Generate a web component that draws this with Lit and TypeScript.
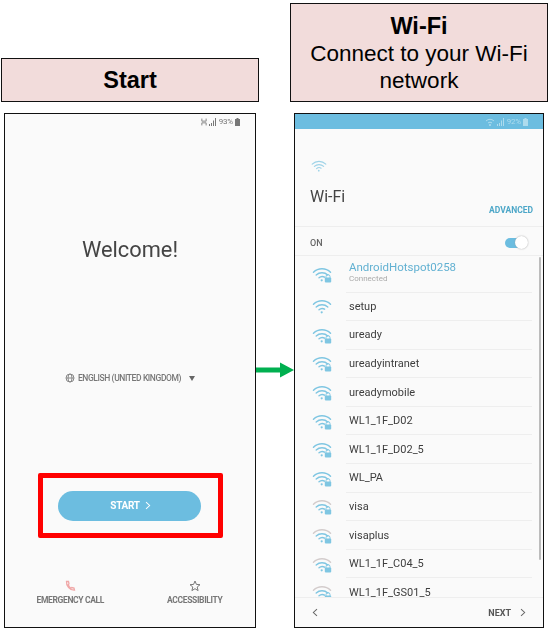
import { LitElement, html, css, svg } from "lit";
import { customElement } from "lit/decorators.js";

const wifi = (lit: number, lock: boolean, color = "#7fc6e2") => {
  const top = lit < 3 ? "#d3cccc" : color;
  return html`<svg class="wifi" viewBox="0 0 20 17" width="20" height="17" fill="none" stroke-linecap="round">
    <path d="M1.500 6.200C6.200 1.600 13.800 1.600 18.500 6.200" stroke=${top} stroke-width="1.500"/>
    <path d="M4.200 9C7.400 6 12.600 6 15.800 9" stroke=${color} stroke-width="1.400"/>
    <path d="M7 11.800C8.700 10.300 11 10.200 12.600 11.200" stroke=${color} stroke-width="1.400"/>
    <circle cx="9.700" cy="14.300" r="1.100" fill=${color}/>
    ${lock
      ? svg`<path d="M14 11.500V10.600a2 2 0 0 1 4 0V11.500" stroke=${color} stroke-width="1"/>
            <rect x="12.800" y="11.400" width="6.400" height="5" rx="1" fill=${color}/>`
      : ""}
  </svg>`;
};

const chevron = (color: string) =>
  html`<svg class="chev" viewBox="0 0 7 10" width="6" height="9" fill="none"><path d="M1.200 1l4.200 4-4.200 4" stroke=${color} stroke-width="1.200"/></svg>`;

const statusIcons = (color: string, pct: string, wifiIcon: boolean) => html`
  <div class="status" style="color:${color}">
    ${wifiIcon
      ? html`<svg viewBox="0 0 10 8" width="10" height="8" fill="none" stroke=${color}><path d="M1 3c2.400-2.200 5.600-2.200 8 0M3 5c1.300-1 2.700-1 4 0"/><circle cx="5" cy="7" r=".6" fill=${color}/></svg>`
      : html`<svg viewBox="0 0 7 8" width="6" height="8" fill="none" stroke=${color}><path d="M1 0v3h5V0M1 8V5h5v3"/></svg>`}
    <svg viewBox="0 0 8 8" width="8" height="8" fill=${color}><path d="M0 8h1V6H0zM2 8h1V5H2zM4 8h1V2.500H4zM6 8h1V0H6z"/></svg>
    <span>${pct}</span>
    <svg viewBox="0 0 5 8" width="5" height="8" fill=${color}><path d="M1.500 0h2v1H5v7H0V1h1.500z"/></svg>
  </div>`;

const networks: [string, number, boolean][] = [
  ["setup", 3, false],
  ["uready", 3, true],
  ["ureadyintranet", 3, true],
  ["ureadymobile", 3, true],
  ["WL1_1F_D02", 3, true],
  ["WL1_1F_D02_5", 3, true],
  ["WL_PA", 3, true],
  ["visa", 2, true],
  ["visaplus", 2, true],
  ["WL1_1F_C04_5", 2, true],
  ["WL1_1F_GS01_5", 2, true],
];

@customElement("app-root")
export class AppRoot extends LitElement {
  static styles = css`
    :host { display: block; width: 550px; height: 629px; position: relative; background: #fff; overflow: hidden; font-family: Roboto, "Liberation Sans", sans-serif; }
    .root { display: flex; align-items: flex-end; height: 629px; box-sizing: border-box; padding: 0 2px 1px 1px; gap: 31px; }
    .col { width: 258px; flex: none; display: flex; flex-direction: column; gap: 11px; }
    .label { box-sizing: border-box; border: 1px solid #111; background: #f2dcdb; color: #000; font-family: "Liberation Sans", Arial, sans-serif; font-size: 22.500px; line-height: 27px; text-align: center; display: flex; flex-direction: column; justify-content: center; }
    .label b { font-weight: 700; font-size: 23.500px; }
    .label.start { height: 44px; }
    .label.wifi-label { height: 99px; padding-top: 1px; }
    .phone { box-sizing: border-box; height: 515px; width: 252px; border: 1px solid #111; background: #fafafa; display: flex; flex-direction: column; overflow: hidden; }
    .phone.left { margin-left: 3px; }
    .phone.right { margin-left: 4px; width: 250px; }
    .inner { display: flex; flex-direction: column; flex: 1; min-height: 0; filter: blur(0.3px); }
    .status { display: flex; justify-content: flex-end; align-items: center; gap: 2px; height: 15px; padding-right: 15px; font-size: 8px; letter-spacing: -0.200px; }
    .welcome { margin-top: 107px; text-align: center; font-size: 21.800px; line-height: 28px; color: #444; }
    .lang { margin-top: 107px; height: 14px; display: flex; justify-content: center; align-items: center; gap: 3px; font-size: 8.500px; letter-spacing: -0.400px; font-weight: 500; color: #777; }
    .lang .tri { margin-left: 5px; width: 0; height: 0; border-left: 3.500px solid transparent; border-right: 3.500px solid transparent; border-top: 5px solid #666; }
    .redbox { align-self: center; box-sizing: border-box; margin: 88px 0 0 1px; width: 185px; height: 65px; border: 5px solid #f00; border-radius: 2px; display: flex; align-items: center; justify-content: center; background: #fafafa; }
    .btn { width: 143px; height: 30px; margin-right: 2px; border-radius: 15px; background: #6cbde0; color: #fff; font-size: 10px; font-weight: 700; display: flex; align-items: center; justify-content: center; gap: 5px; letter-spacing: -0.300px; padding: 0 0 1px 2px; box-sizing: border-box; }
    .bottom { margin-top: 42px; display: grid; grid-template-columns: 1fr 1fr; padding: 0 5px 0 0; }
    .act { display: flex; flex-direction: column; align-items: center; gap: 3px; font-size: 8.500px; letter-spacing: -0.350px; font-weight: 700; color: #777; line-height: 10px; }
    .act:first-child { padding-left: 8px; }
    .act:last-child { padding-left: 12px; }
    .appbar { height: 15px; background: #6cbde0; flex: none; }
    .appbar .status { padding-right: 15px; height: 15px; opacity: 0.9; }
    .head { height: 98px; flex: none; border-bottom: 1px solid #eee; padding: 30px 10px 0 15px; box-sizing: border-box; display: flex; flex-direction: column; }
    .head .wifi { width: 16px; height: 14px; margin-left: 1px; flex: none; }
    .head .title { margin-top: 13px; font-size: 16px; line-height: 22px; color: #444; }
    .head .adv { margin-top: -3px; align-self: flex-end; font-size: 8.500px; line-height: 10px; font-weight: 700; color: #4da7c8; }
    .on { height: 29px; flex: none; box-sizing: border-box; border-bottom: 1px solid #eee; padding: 3px 16px 0 15px; display: flex; align-items: center; justify-content: space-between; font-size: 9px; font-weight: 500; color: #666; }
    .toggle { position: relative; width: 22px; height: 10px; border-radius: 5px; background: #6cbde0; }
    .toggle::after { content: ""; position: absolute; right: -1px; top: -1.500px; width: 13px; height: 13px; border-radius: 50%; background: #fff; box-shadow: 0 0 1.500px #999; }
    .listwrap { position: relative; flex: 1; min-height: 0; overflow: hidden; }
    .scroll { position: absolute; right: 2px; top: 1px; width: 2px; height: 303px; background: #bcbcbc; border-radius: 1px; }
    .row { height: 28.600px; box-sizing: border-box; display: flex; align-items: center; padding-left: 17px; }
    .row.first { height: 36.500px; }
    .row .wifi { flex: none; margin-right: 17px; }
    .row .t { flex: none; width: 186px; height: 100%; box-sizing: border-box; border-bottom: 1px solid #eee; margin-left: -3px; padding-left: 3px; display: flex; flex-direction: column; justify-content: center; font-size: 11px; color: #3e3e3e; line-height: 13px; }
    .row.first .t { padding-bottom: 2px; }
    .row .t .ssid { color: #62b1d2; font-size: 11.500px; }
    .row .t small { font-size: 8px; line-height: 10px; color: #aaa; }
    .foot { height: 30px; flex: none; border-top: 1px solid #eee; box-sizing: border-box; display: flex; align-items: center; justify-content: space-between; padding: 0 17px 0 17px; background: #fafafa; }
    .next { display: flex; align-items: center; gap: 9px; font-size: 9px; font-weight: 700; color: #555; }
    .arrow { position: absolute; left: 256px; top: 362px; }
  `;

  render() {
    return html`
      <div class="root">
        <div class="col">
          <div class="label start"><b>Start</b></div>
          <div class="phone left"><div class="inner">
            ${statusIcons("#777", "93%", false)}
            <div class="welcome">Welcome!</div>
            <div class="lang">
              <svg viewBox="0 0 10 10" width="10" height="10" fill="none" stroke="#888" stroke-width="1"><circle cx="5" cy="5" r="4"/><ellipse cx="5" cy="5" rx="2" ry="4"/><path d="M1 5h8"/></svg>
              <span>ENGLISH (UNITED KINGDOM)</span><i class="tri"></i>
            </div>
            <div class="redbox"><div class="btn"><span>START</span>${chevron("#fff")}</div></div>
            <div class="bottom">
              <div class="act">
                <svg viewBox="0 0 12 12" width="12" height="12" fill="none" stroke="#f0a8a8" stroke-width="1.300" stroke-linecap="round"><path d="M2.500 1.500C2 5.500 6 10.500 10.500 10.200L10 8 7.800 7.500 7 8.300C5.700 7.500 4.700 6 4.300 4.700L5 3.800 4.500 1.500z"/></svg>
                <span>EMERGENCY CALL</span>
              </div>
              <div class="act">
                <svg viewBox="0 0 12 12" width="12" height="12" fill="none" stroke="#777" stroke-width="1" stroke-linejoin="round"><path d="M6 1l1.400 3.400 3.600.3-2.800 2.300.9 3.600L6 8.700l-3.100 1.900.9-3.600L1 4.700l3.600-.3z"/></svg>
                <span>ACCESSIBILITY</span>
              </div>
            </div>
          </div></div>
        </div>
        <div class="col">
          <div class="label wifi-label"><b>Wi-Fi</b><span>Connect to your Wi-Fi</span><span>network</span></div>
          <div class="phone right"><div class="inner">
            <div class="appbar">${statusIcons("#b5dfef", "92%", true)}</div>
            <div class="head">
              ${wifi(3, false, "#9fd3e8")}
              <div class="title">Wi-Fi</div>
              <div class="adv">ADVANCED</div>
            </div>
            <div class="on"><span>ON</span><div class="toggle"></div></div>
            <div class="listwrap">
              <div class="scroll"></div>
              <div class="row first">${wifi(3, true)}<div class="t"><span class="ssid">AndroidHotspot0258</span><small>Connected</small></div></div>
              ${networks.map(([n, l, k]) => html`<div class="row">${wifi(l, k)}<div class="t">${n}</div></div>`)}
            </div>
            <div class="foot">
              <svg viewBox="0 0 7 10" width="6" height="9" fill="none"><path d="M5.800 1L1.600 5l4.200 4" stroke="#666" stroke-width="1.200"/></svg>
              <div class="next"><span>NEXT</span>${chevron("#666")}</div>
            </div>
          </div></div>
        </div>
      </div>
      <svg class="arrow" width="38" height="16" viewBox="0 0 38 16"><path d="M0 5.500H24V0.500L38 8 24 15.500V10.500H0z" fill="#00b050"/></svg>
    `;
  }
}
